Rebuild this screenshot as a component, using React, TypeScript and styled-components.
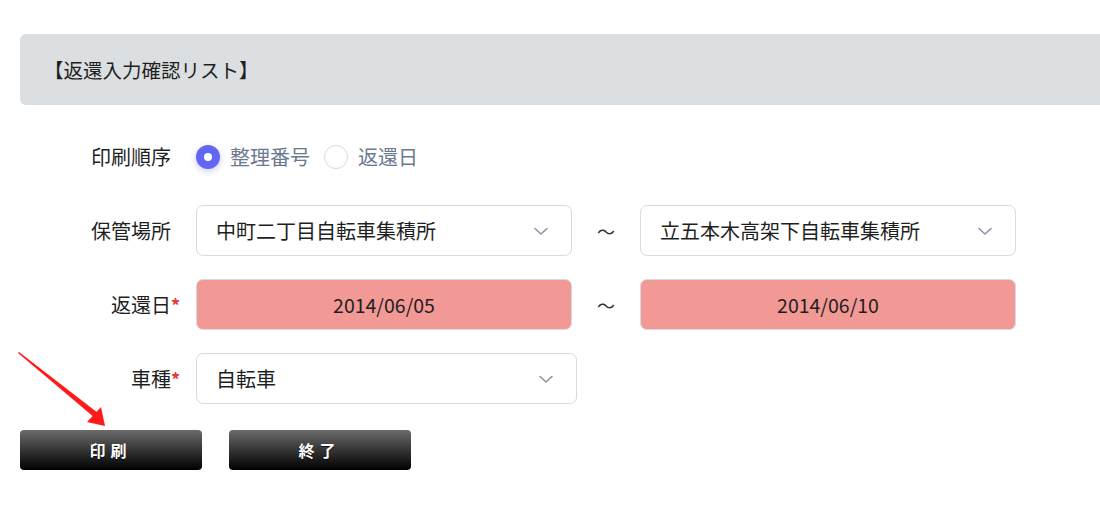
import styled, { createGlobalStyle } from "styled-components";
import { useState } from "react";

const FONT = `"Noto Sans CJK JP", "Noto Sans", sans-serif`;

const GlobalStyle = createGlobalStyle`
  html, body {
    margin: 0;
    padding: 0;
    background: #ffffff;
    overflow: hidden;
  }
  body {
    font-family: ${FONT};
    color: #1f1f1f;
  }
`;

const LOCATIONS = ["中町二丁目自転車集積所", "立五本木高架下自転車集積所"];

const ChevronIcon = () => (
  <svg width="16" height="10" viewBox="0 0 16 10" fill="none">
    <path d="M2 2.5L8 8L14 2.5" stroke="#8a94a6" strokeWidth="1.6" strokeLinecap="round" strokeLinejoin="round" />
  </svg>
);

const PointerArrow = () => (
  <ArrowSvg width="120" height="90" viewBox="0 0 120 90">
    <polygon points="8,8 9,7 88,68 85,73" fill="#ff1a1a" />
    <polygon points="95,81 91,62 77,77" fill="#ff1a1a" />
  </ArrowSvg>
);

function Select({ value, wide }: { value: string; wide?: boolean }) {
  return (
    <SelectBox wide={wide ? "true" : undefined}>
      <SelectText>{value}</SelectText>
      <ChevronIcon />
    </SelectBox>
  );
}

export default function App() {
  const [order, setOrder] = useState("seiri");

  return (
    <Page>
      <GlobalStyle />
      <TitleBar>【返還入力確認リスト】</TitleBar>

      <Form>
        <Row>
          <Label>印刷順序</Label>
          <RadioGroup>
            <RadioOption onClick={() => setOrder("seiri")}>
              <RadioCircle checked={order === "seiri"} />
              <RadioText>整理番号</RadioText>
            </RadioOption>
            <RadioOption onClick={() => setOrder("henkan")}>
              <RadioCircle checked={order === "henkan"} />
              <RadioText>返還日</RadioText>
            </RadioOption>
          </RadioGroup>
        </Row>

        <Row>
          <Label>保管場所</Label>
          <Select value={LOCATIONS[0]} />
          <Tilde>～</Tilde>
          <Select value={LOCATIONS[1]} />
        </Row>

        <Row>
          <Label>
            返還日<Required>*</Required>
          </Label>
          <DateBox>2014/06/05</DateBox>
          <Tilde>～</Tilde>
          <DateBox>2014/06/10</DateBox>
        </Row>

        <Row>
          <Label>
            車種<Required>*</Required>
          </Label>
          <Select value="自転車" wide />
        </Row>
      </Form>

      <ButtonBar>
        <PointerArrow />
        <BlackButton>印刷</BlackButton>
        <BlackButton>終了</BlackButton>
      </ButtonBar>
    </Page>
  );
}

const Page = styled.div`
  padding: 34px 0 0 20px;
  width: 1100px;
  box-sizing: border-box;
  font-family: ${FONT};
`;

const TitleBar = styled.div`
  height: 71px;
  margin-right: -20px;
  background: #dcdfe2;
  border-radius: 6px 0 0 6px;
  display: flex;
  align-items: center;
  padding-left: 24px;
  font-size: 19.5px;
  color: #1f1f1f;
`;

const Form = styled.div`
  display: flex;
  flex-direction: column;
  gap: 23px;
  padding-top: 26px;
`;

const Row = styled.div`
  display: flex;
  align-items: center;
  height: 51px;
`;

const Label = styled.div`
  width: 180px;
  margin-left: -20px;
  margin-right: 16px;
  padding-right: 9px;
  box-sizing: border-box;
  text-align: right;
  font-size: 20px;
  color: #1f1f1f;
  white-space: nowrap;
`;

const Required = styled.span`
  color: #e53935;
  margin-right: -9px;
  display: inline-block;
  width: 9px;
  text-align: right;
  font-size: 18px;
  font-weight: 700;
`;

const RadioGroup = styled.div`
  display: flex;
  align-items: center;
  gap: 14px;
`;

const RadioOption = styled.label`
  display: flex;
  align-items: center;
  gap: 10px;
  cursor: pointer;
`;

const RadioCircle = styled.span<{ checked: boolean }>`
  width: 24px;
  height: 24px;
  border-radius: 50%;
  box-sizing: border-box;
  background: ${({ checked }) => (checked ? "#6366f1" : "#ffffff")};
  border: ${({ checked }) => (checked ? "none" : "1px solid #d5dae2")};
  box-shadow: ${({ checked }) => (checked ? "0 2px 6px rgba(99, 102, 241, 0.35)" : "none")};
  display: flex;
  align-items: center;
  justify-content: center;
  &::after {
    content: "";
    width: 8px;
    height: 8px;
    border-radius: 50%;
    background: #ffffff;
    display: ${({ checked }) => (checked ? "block" : "none")};
  }
`;

const RadioText = styled.span`
  font-size: 20px;
  color: #6b7a90;
`;

const SelectBox = styled.div<{ wide?: string }>`
  width: ${({ wide }) => (wide ? "381px" : "376px")};
  height: 51px;
  box-sizing: border-box;
  border: 1px solid #d6dbe1;
  border-radius: 7px;
  background: #ffffff;
  display: flex;
  align-items: center;
  justify-content: space-between;
  padding: 0 22px 0 19px;
`;

const SelectText = styled.span`
  font-size: 20px;
  color: #1f1f1f;
`;

const Tilde = styled.span`
  width: 68px;
  text-align: center;
  font-size: 18px;
  color: #333333;
`;

const DateBox = styled.div`
  width: 376px;
  height: 51px;
  box-sizing: border-box;
  border: 1px solid #d6dbe1;
  border-radius: 7px;
  background: #f29895;
  display: flex;
  align-items: center;
  justify-content: center;
  font-size: 19.5px;
  color: #1f1f1f;
`;

const ButtonBar = styled.div`
  position: relative;
  display: flex;
  gap: 27px;
  margin-top: 26px;
`;

const ArrowSvg = styled.svg`
  position: absolute;
  left: -10px;
  top: -85px;
  pointer-events: none;
`;

const BlackButton = styled.button`
  width: 182px;
  height: 40px;
  border: none;
  border-radius: 4px;
  background: linear-gradient(to bottom, #6b6b6b 0%, #3a3a3a 45%, #000000 100%);
  color: #ffffff;
  font-family: ${FONT};
  font-size: 16px;
  font-weight: 700;
  letter-spacing: 5px;
  padding-left: 5px;
  text-shadow: 0 1px 1px rgba(0, 0, 0, 0.8);
  cursor: pointer;
`;
